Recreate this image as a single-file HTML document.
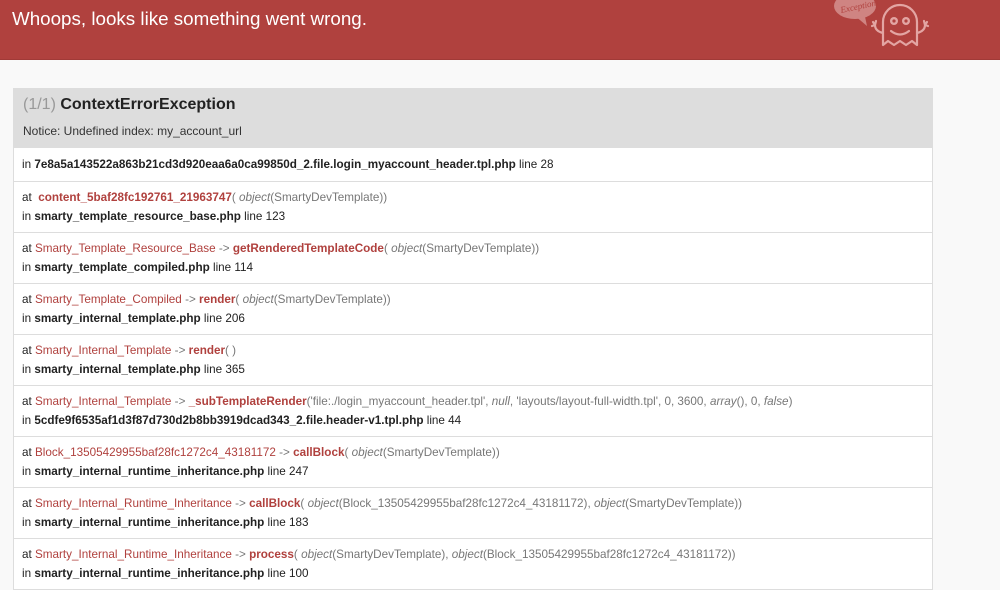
<!DOCTYPE html>
<html><head><meta charset="utf-8"><style>
*{margin:0;padding:0;box-sizing:border-box}
body{width:1000px;height:561px;overflow:hidden;background:#f9f9f9;font-family:"Liberation Sans",Arial,sans-serif;color:#222;font-size:11.7px}
.hdr{height:60px;background:#b0413e;border-bottom:1px solid #a03a37;position:relative}
.hdr h1{color:#fff;font-weight:normal;font-size:18.8px;position:absolute;left:12px;top:8px}
.box{position:absolute;left:13px;top:88px;width:920px;border:1px solid #ddd;border-top:none}
.top{background:#ddd;height:59px;padding:8px 9px 0}
.top h2{font-size:16px;font-weight:bold;color:#222;height:20px}
.top h2 span{color:#999;font-weight:normal}
.top .msg{margin-top:8px;font-size:12px;color:#333}
.row{background:#fff;border-top:1px solid #ddd;padding:0 8px;height:51px;line-height:19px;padding-top:6px}
.row.first{height:34px;padding-top:7px}
b{font-weight:bold;color:#222}
.c{color:#b0413e}
.m{color:#b0413e;font-weight:bold}
.a{color:#777}
i{color:#777}
</style></head><body>
<div class="hdr"><h1>Whoops, looks like something went wrong.</h1>
<svg style="position:absolute;left:830px;top:0" width="110" height="55" viewBox="0 0 110 55">
<g fill="#cf8482"><ellipse cx="25" cy="6" rx="21" ry="13"/><path d="M24 15 L37 26 L34 12z"/></g>
<text x="10" y="10" font-size="9" font-style="italic" fill="#b0413e" font-family="Liberation Serif" transform="rotate(-12 25 6)">Exception!</text>
<g fill="none" stroke="#e3a5a3" stroke-width="2.2" stroke-linecap="round" stroke-linejoin="round">
<path d="M53 45 V22 a17 17 0 0 1 34 0 V45 l-5 -4 l-6 4 l-6 -4 l-6 4 l-6 -4 z"/>
<path d="M61 31 q9 7 18 0"/>
<path d="M53 33 q-8 -2 -8 -8 M45 25 l-2 -3 M45 25 l-3 1 M45 25 l1 -4"/>
<path d="M87 33 q8 -2 8 -8 M95 25 l2 -3 M95 25 l3 1 M95 25 l-1 -4"/></g>
<g fill="#e3a5a3"><circle cx="64" cy="21" r="4"/><circle cx="76" cy="21" r="4"/></g>
<g fill="#b0413e"><circle cx="64" cy="21" r="1.6"/><circle cx="76" cy="21" r="1.6"/></g>
</svg>
</div>
<div class="box">
<div class="top"><h2><span>(1/1)</span> ContextErrorException</h2><div class="msg">Notice: Undefined index: my_account_url</div></div>
<div class="row first">in <b>7e8a5a143522a863b21cd3d920eaa6a0ca99850d_2.file.login_myaccount_header.tpl.php</b> line 28</div>
<div class="row">at &nbsp;<span class="m">content_5baf28fc192761_21963747</span><span class="a">(</span> <i>object</i><span class="a">(SmartyDevTemplate))</span><br>in <b>smarty_template_resource_base.php</b> line 123</div>
<div class="row">at <span class="c">Smarty_Template_Resource_Base</span> <span class="a">-&gt;</span> <span class="m">getRenderedTemplateCode</span><span class="a">(</span> <i>object</i><span class="a">(SmartyDevTemplate))</span><br>in <b>smarty_template_compiled.php</b> line 114</div>
<div class="row">at <span class="c">Smarty_Template_Compiled</span> <span class="a">-&gt;</span> <span class="m">render</span><span class="a">(</span> <i>object</i><span class="a">(SmartyDevTemplate))</span><br>in <b>smarty_internal_template.php</b> line 206</div>
<div class="row">at <span class="c">Smarty_Internal_Template</span> <span class="a">-&gt;</span> <span class="m">render</span><span class="a">( )</span><br>in <b>smarty_internal_template.php</b> line 365</div>
<div class="row">at <span class="c">Smarty_Internal_Template</span> <span class="a">-&gt;</span> <span class="m">_subTemplateRender</span><span class="a">('file:./login_myaccount_header.tpl', <i>null</i>, 'layouts/layout-full-width.tpl', 0, 3600, <i>array</i>(), 0, <i>false</i>)</span><br>in <b>5cdfe9f6535af1d3f87d730d2b8bb3919dcad343_2.file.header-v1.tpl.php</b> line 44</div>
<div class="row">at <span class="c">Block_13505429955baf28fc1272c4_43181172</span> <span class="a">-&gt;</span> <span class="m">callBlock</span><span class="a">(</span> <i>object</i><span class="a">(SmartyDevTemplate))</span><br>in <b>smarty_internal_runtime_inheritance.php</b> line 247</div>
<div class="row">at <span class="c">Smarty_Internal_Runtime_Inheritance</span> <span class="a">-&gt;</span> <span class="m">callBlock</span><span class="a">(</span> <i>object</i><span class="a">(Block_13505429955baf28fc1272c4_43181172),</span> <i>object</i><span class="a">(SmartyDevTemplate))</span><br>in <b>smarty_internal_runtime_inheritance.php</b> line 183</div>
<div class="row">at <span class="c">Smarty_Internal_Runtime_Inheritance</span> <span class="a">-&gt;</span> <span class="m">process</span><span class="a">(</span> <i>object</i><span class="a">(SmartyDevTemplate),</span> <i>object</i><span class="a">(Block_13505429955baf28fc1272c4_43181172))</span><br>in <b>smarty_internal_runtime_inheritance.php</b> line 100</div>
</div>
</body></html>
